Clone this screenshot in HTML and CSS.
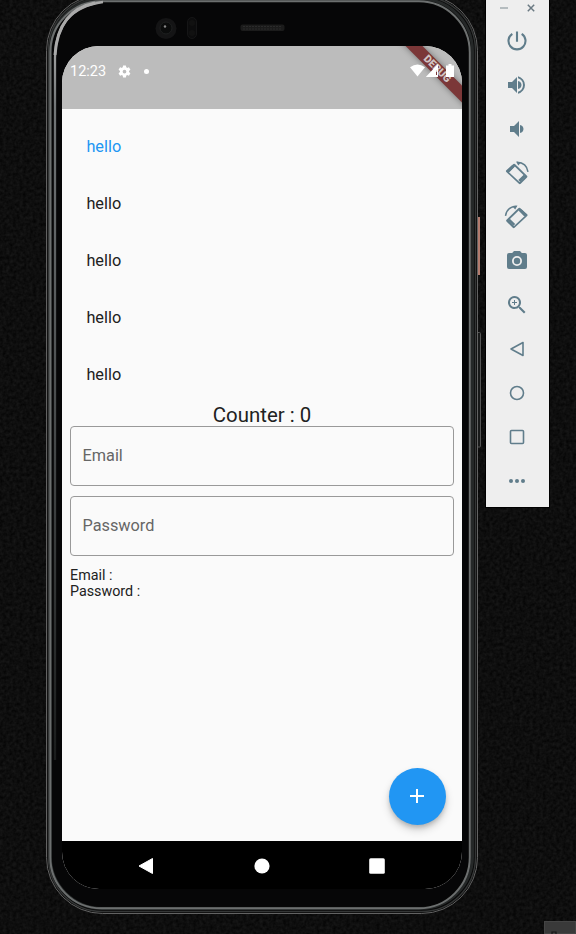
FILE: index.html
```html
<!DOCTYPE html>
<html lang="en">
<head>
<meta charset="utf-8">
<title>Emulator</title>
<link rel="stylesheet" href="styles.css">
</head>
<body>
<main class="desktop">
  <svg class="texture" width="576" height="934" aria-hidden="true">
    <filter id="grain" x="0" y="0" width="100%" height="100%" color-interpolation-filters="sRGB">
      <feTurbulence type="fractalNoise" baseFrequency="0.3" numOctaves="2" seed="4"/>
      <feColorMatrix values="0.1 0 0 0 0.005  0.1 0 0 0 0.005  0.1 0 0 0 0.005  0 0 0 0 1"/>
    </filter>
    <rect width="576" height="934" filter="url(#grain)"/>
  </svg>

  <section class="phone">
    <svg class="bezel" viewBox="46 -6 436 921" width="436" height="921" fill="none" aria-hidden="true">
      <defs>
        <linearGradient id="fade" gradientUnits="userSpaceOnUse" x1="0" y1="0" x2="0" y2="760">
          <stop offset="0" stop-color="#a8a8a8"/><stop offset=".05" stop-color="#aaa"/><stop offset=".14" stop-color="#727678"/><stop offset="1" stop-color="#1a1c1c"/>
        </linearGradient>
      </defs>
      <rect x="477" y="217" width="3" height="58" fill="#b37b6e"/>
      <path d="M477 332.500h2.500q1 0 1 1V446q0 1-1 1H477" fill="#191a1a" stroke="#555"/>
      <rect x="46.500" y="-5.500" width="431" height="919" rx="56" fill="#080808" stroke="#626262"/>
      <rect x="48.500" y="-3.500" width="427" height="915" rx="54" stroke="#343636" stroke-width="1.500"/>
      <rect x="50.500" y="-1" width="422" height="909.500" rx="52" stroke="#252828" stroke-width="3"/>
      <rect x="50.300" y="1.300" width="419.500" height="907" rx="51" stroke="#6c6f6f" stroke-width="2"/>
      <rect x="52" y="3" width="416" height="903.500" rx="50" fill="#060607"/>
      <path d="M55 760V58Q56 8 103 2" stroke="url(#fade)" stroke-width="2.300"/>
      <path d="M55 55Q58 10 95 3" stroke="#aaa" stroke-width="3"/>
      <circle cx="166" cy="28.500" r="10.500" fill="#141415"/>
      <circle cx="166" cy="28" r="6" fill="#0b0c0c" stroke="#1e2020"/>
      <circle cx="165" cy="26.500" r="1.200" fill="#888"/>
      <rect x="187.500" y="17.500" width="9" height="21" rx="4.500" fill="#0c0c0d" stroke="#151516"/>
      <circle cx="192" cy="23" r="3" fill="#111"/><circle cx="192" cy="33" r="3" fill="#111"/>
      <rect x="240.500" y="24.500" width="44" height="6.500" rx="2" fill="#1b1b1b"/>
      <path d="M243 26.500h39M243 29h39" stroke="#2b2b2b" stroke-dasharray="2 1"/>
    </svg>

    <div class="screen">
      <header class="status">
        <span class="clock">12:23</span>
        <svg class="gear" viewBox="0 0 24 24"><path d="M19.140 12.940c.04-.3.060-.610.060-.940 0-.320-.020-.640-.070-.940l2.030-1.580a.49.49 0 0 0 .120-.610l-1.920-3.320a.488.488 0 0 0-.590-.220l-2.390.960c-.5-.380-1.030-.7-1.620-.940l-.360-2.540a.484.484 0 0 0-.480-.410h-3.840c-.240 0-.430.170-.470.410l-.360 2.540c-.590.240-1.130.570-1.620.940l-2.390-.960c-.220-.080-.470 0-.590.220L2.740 8.870c-.120.210-.080.470.120.610l2.030 1.580c-.050.3-.090.630-.090.940s.020.640.070.940l-2.030 1.580a.49.49 0 0 0-.120.610l1.920 3.320c.120.220.370.290.590.220l2.390-.960c.5.380 1.030.7 1.620.940l.360 2.540c.050.240.240.410.480.410h3.840c.240 0 .440-.170.470-.410l.360-2.540c.590-.240 1.130-.560 1.620-.940l2.390.960c.220.080.470 0 .590-.220l1.920-3.320c.120-.220.070-.470-.120-.610l-2.010-1.580zM12 15a3 3 0 1 1 0-6 3 3 0 0 1 0 6z"/></svg>
        <i class="dot"></i>
      </header>
      <div class="ribbon">DEBUG</div>
      <svg class="signals" width="46" height="14" viewBox="0 0 46 14" fill="#fff">
        <path d="M0 3.200Q7.500-2 15 3.200L7.500 12.500z"/>
        <path d="M28 0v13H15.800zM26 6.500v4.500h1V6.500z" fill-rule="evenodd"/>
        <path d="M38.500 0h3v1.500H44V13h-8V1.500h2.500z"/>
      </svg>
      <div class="content">
        <ul class="list">
          <li class="active">hello</li><li>hello</li><li>hello</li><li>hello</li><li>hello</li>
        </ul>
        <p class="counter">Counter : 0</p>
        <div class="fields">
          <div class="field">Email</div>
          <div class="field">Password</div>
          <p class="result">Email :<br>Password :</p>
        </div>
        <button class="fab" aria-label="Add"><svg width="16" height="16" viewBox="0 0 16 16"><path d="M8 1v14M1 8h14" stroke="#fff" stroke-width="2"/></svg></button>
      </div>
      <nav class="nav">
        <svg viewBox="0 0 16 16"><path d="M14.500 0.500v15L1 8z" stroke="#fff" stroke-width="1" stroke-linejoin="round"/></svg>
        <svg viewBox="0 0 16 16"><circle cx="8" cy="8" r="7.600"/></svg>
        <svg viewBox="0 0 16 16"><rect x=".2" y=".2" width="15.600" height="15.600" rx="1.500"/></svg>
      </nav>
    </div>
  </section>

  <aside class="toolbar">
    <div class="window">
      <svg width="10" height="10" viewBox="0 0 10 10"><path d="M1 5h8" stroke="#a2abaf" stroke-width="1.500"/></svg>
      <svg width="10" height="10" viewBox="0 0 10 10"><path d="M1.800 1.800l6.400 6.400m0-6.400l-6.400 6.400" stroke="#6b7a83" stroke-width="1.500"/></svg>
    </div>
    <div class="tools">
      <svg viewBox="0 0 24 24"><path d="M12 2.500v10.300M7.300 4.800a8.500 8.500 0 1 0 9.400 0" class="line bold"/></svg>
      <svg viewBox="0 0 24 24"><path d="M3 9v6h4l5 5V4L7 9zm13.500 3A4.500 4.500 0 0 0 13 7.970v8.050A4.500 4.500 0 0 0 16.500 12zM13 3.230v2.060a7 7 0 0 1 0 13.420v2.060a9 9 0 0 0 0-17.540z"/></svg>
      <svg viewBox="0 0 24 24"><path d="M18.500 12A4.500 4.500 0 0 0 15 7.970v8.050A4.500 4.500 0 0 0 18.500 12zM5 9v6h4l5 5V4L9 9z"/></svg>
      <svg viewBox="0 0 24 24"><g id="rotate"><path d="M8.400 2.500q.9-.7 1.800.1L22 14.100q.8.9 0 1.800l-6.300 6.300q-.9.800-1.800 0L1.300 10.400q-.8-.9 0-1.800zM9.800 5L4 10.600 14.500 20.500l5.600-5.700z" fill-rule="evenodd" transform="translate(0 .6)"/><path d="M6.800 4.600L2.500 8.900l2 2 5.400-5.500zM18.700 13.800L13.300 19l1.800 1.800 5.600-5.300z"/><path d="M12 1.300q9.700.5 11 9.600" class="line"/><path d="M11 .6l5 1-2.700 3z"/></g></svg>
      <svg viewBox="0 0 24 24"><use href="#rotate" transform="matrix(-1 0 0 1 23.500 0)"/></svg>
      <svg viewBox="0 0 24 24"><path d="M9 2L7.170 4H4a2 2 0 0 0-2 2v12a2 2 0 0 0 2 2h16a2 2 0 0 0 2-2V6a2 2 0 0 0-2-2h-3.170L15 2zm3 15a5 5 0 1 1 0-10 5 5 0 0 1 0 10z"/><circle cx="12" cy="12" r="3.200"/></svg>
      <svg viewBox="0 0 24 24"><path d="M15.500 14h-.790l-.280-.270A6.500 6.500 0 1 0 13.730 14.430l.270.280v.790l5 4.990L20.490 19zm-6 0a4.500 4.500 0 1 1 0-9 4.500 4.500 0 0 1 0 9zM12 10h-2v2H9v-2H7V9h2V7h1v2h2z"/></svg>
      <svg viewBox="0 0 24 24"><path d="M18 5.500v13L6 12z" class="line thin"/></svg>
      <svg viewBox="0 0 24 24"><circle cx="12" cy="12" r="6.500" class="line thin"/></svg>
      <svg viewBox="0 0 24 24"><rect x="5.500" y="5.500" width="13" height="13" rx="1" class="line thin"/></svg>
      <svg viewBox="0 0 24 24"><circle cx="6" cy="12" r="2"/><circle cx="12" cy="12" r="2"/><circle cx="18" cy="12" r="2"/></svg>
    </div>
  </aside>
  <div class="corner"><svg width="6" height="4" viewBox="0 0 6 4"><path d="M1 4V1h4v3" fill="none" stroke="#161616" stroke-width="1.200"/></svg></div>
</main>
</body>
</html>
```
FILE: styles.css
```css
* { box-sizing: border-box; }
body { margin: 0; background: #0e0e0e; font-family: Roboto, "Liberation Sans", sans-serif; }
p, ul { margin: 0; padding: 0; }
svg { display: block; }
.desktop { position: relative; width: 576px; height: 934px; overflow: hidden; }
.texture { position: absolute; left: 0; top: 0; }
.phone { position: absolute; left: 46px; top: -6px; width: 436px; height: 921px; padding: 52px 20px 26px 16px; }
.bezel { position: absolute; left: 0; top: 0; }
.screen { position: relative; display: flex; flex-direction: column; width: 400px; height: 843px; border-radius: 37px; overflow: hidden; background: #fafafa; color: #212121; }
.status { display: flex; align-items: center; height: 63px; padding: 0 8px 12px; background: #bcbcbc; color: #fff; }
.clock { width: 47px; padding-top: 1px; font-size: 14.5px; line-height: 20px; }
.gear { width: 15px; height: 15px; fill: #fff; }
.dot { width: 5px; height: 5px; margin-left: 12px; border-radius: 50%; background: #fff; }
.ribbon { position: absolute; left: 325px; top: 17px; width: 100px; height: 12.2px; transform: rotate(45deg); background: #7b3738; color: #d0c3c3; box-shadow: 0 0 6px rgba(0,0,0,.4); font-size: 10.6px; font-weight: 900; line-height: 12.2px; text-align: center; }
.signals { position: absolute; left: 348px; top: 18px; }
.content { position: relative; flex: 1; }
.list { padding-top: 8px; list-style: none; }
.list li { height: 57px; padding: 1px 0 0 24.4px; font-size: 16.3px; line-height: 57px; }
.list .active { color: #2196f3; }
.counter { height: 24px; font-size: 20.4px; line-height: 26px; text-align: center; }
.fields { display: flex; flex-direction: column; gap: 10px; padding: 0 8px; }
.field { height: 60px; padding-left: 11.5px; border: 1px solid #999; border-radius: 4px; color: #666; font-size: 16.3px; line-height: 58px; }
.result { padding-top: 1px; font-size: 14.3px; line-height: 16.2px; }
.fab { position: absolute; right: 16px; bottom: 16px; display: flex; align-items: center; justify-content: center; width: 57px; height: 57px; padding: 0 1px 1px 0; border: 0; border-radius: 50%; background: #2196f3; box-shadow: 0 3px 5px -1px rgba(0,0,0,.2), 0 5px 9px rgba(0,0,0,.16); }
.nav { display: flex; align-items: center; justify-content: space-between; height: 48px; padding: 1px 77px 0 76px; background: #000; }
.nav svg { width: 16px; height: 16px; fill: #fff; }
.toolbar { position: absolute; left: 486px; top: 0; width: 63px; height: 507px; background: #eee; box-shadow: 0 0 0 1px #000; }
.window { display: flex; justify-content: space-between; height: 19px; padding: 3px 13px 0; }
.tools { display: flex; flex-direction: column; align-items: center; padding-right: 1px; }
.tools svg { width: 24px; height: 24px; margin: 10px 0; fill: #607d8b; overflow: visible; }
.tools .line { fill: none; stroke: #607d8b; stroke-width: 1.5; }
.tools .bold { stroke-width: 2.1; }
.tools .thin { stroke-width: 1.6; stroke-linejoin: round; }
.corner { position: absolute; right: 0; bottom: 0; width: 32px; height: 13px; padding: 9px 0 0 6px; border: 1px solid #444; background: #393939; }
```
